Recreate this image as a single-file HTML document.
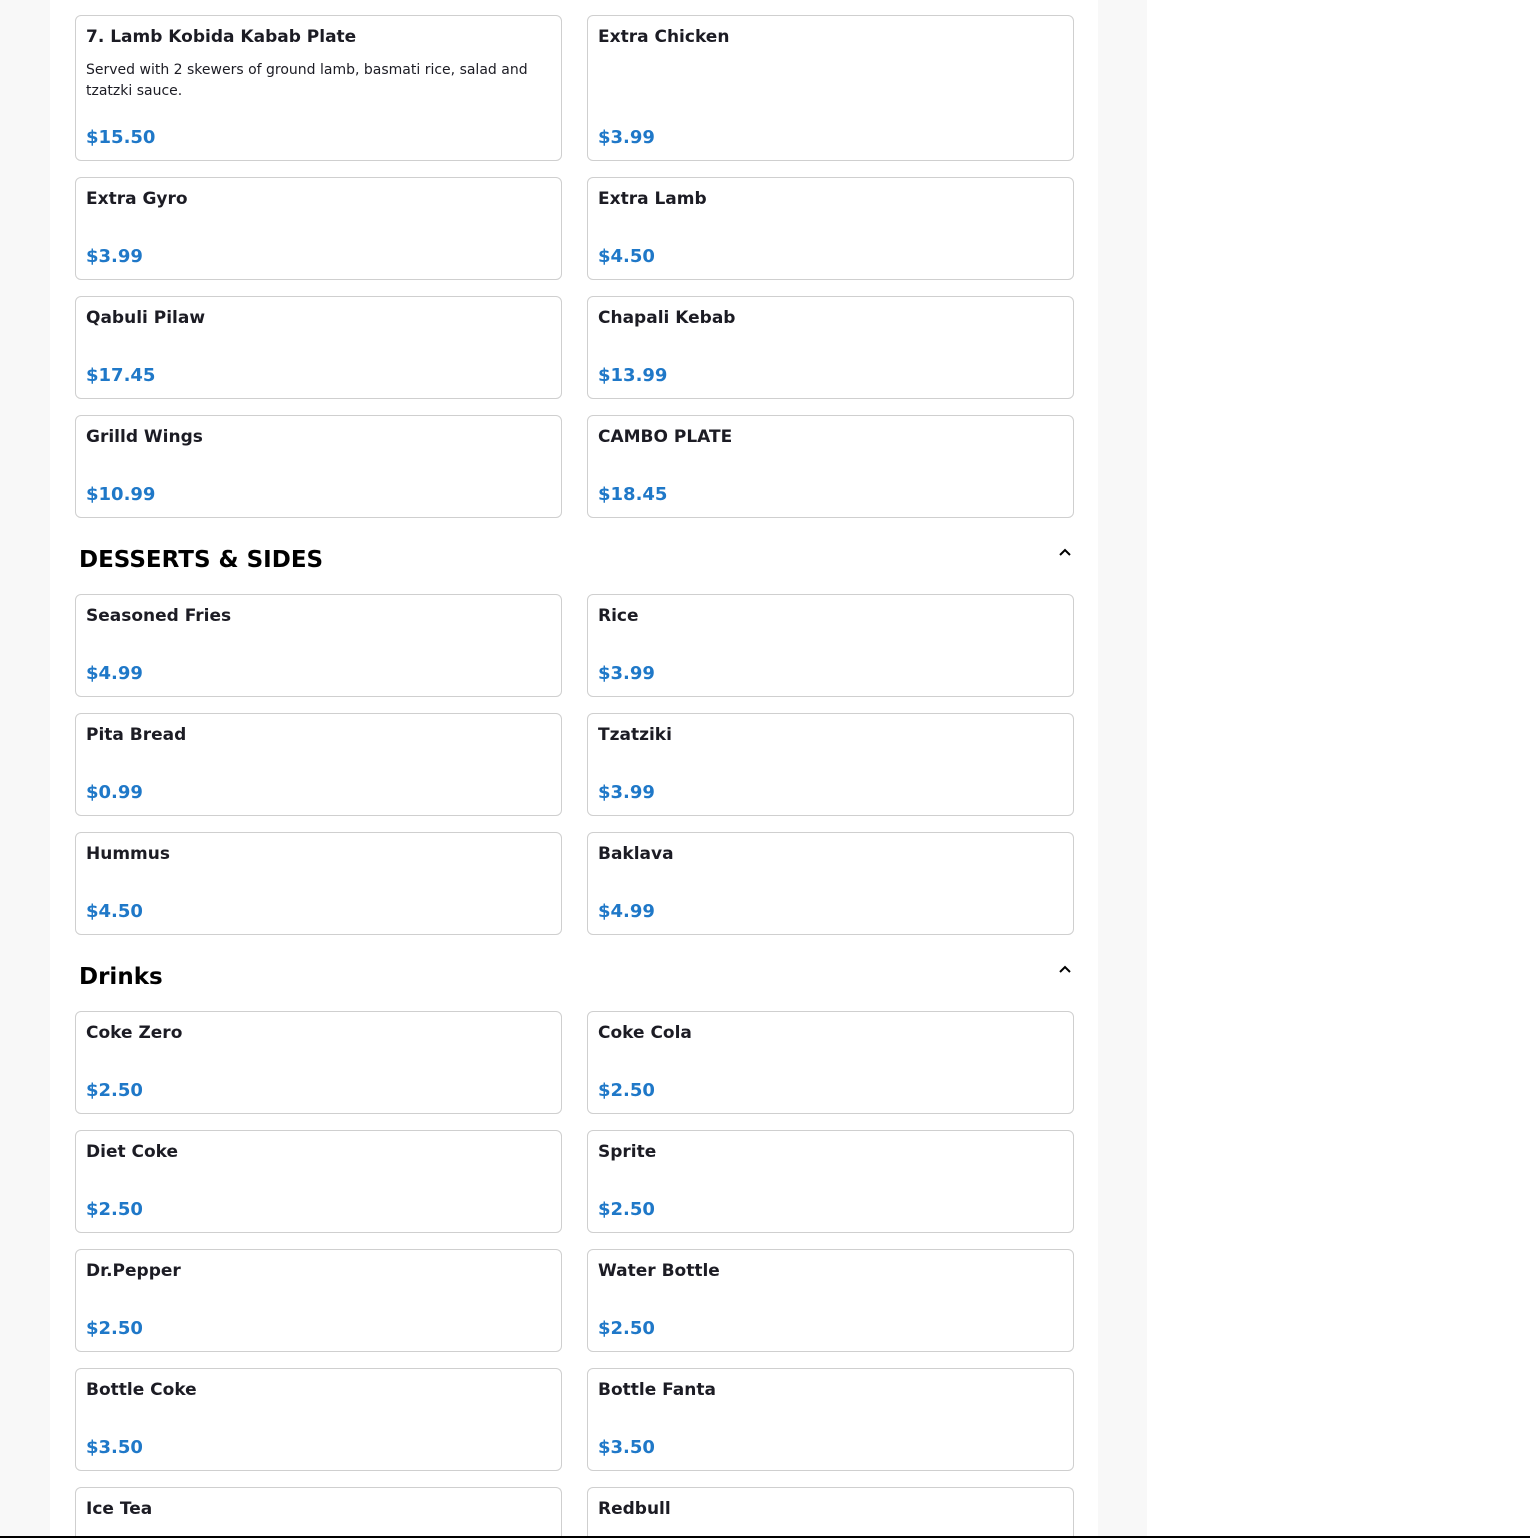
<!DOCTYPE html>
<html style="width:1530px;height:1538px;overflow:hidden"><head><style>
*{box-sizing:border-box;margin:0;padding:0}
body{width:1530px;height:1538px;overflow:hidden;background:#fff;font-family:"DejaVu Sans","Liberation Sans",sans-serif;color:#1c1c24;position:relative}
.lg{position:absolute;left:0;top:0;width:50px;height:1538px;background:#f8f8f8}
.rg{position:absolute;left:1098px;top:0;width:49px;height:1538px;background:#f8f8f8}
.bl{position:absolute;left:0;top:1536px;width:1530px;height:2px;background:#000;z-index:5}
.card{position:absolute;width:487px;height:103px;border:1px solid #cfcfcf;border-radius:6px;background:#fff;padding:10px 10px}
.card .t{font-weight:bold;font-size:17px;line-height:22px}
.card .d{font-size:14px;line-height:21px;margin-top:12px}
.card .p{position:absolute;left:10px;bottom:10px;font-weight:bold;font-size:18px;line-height:24px;color:#1f78c8}
.h{position:absolute;left:79px;font-weight:bold;font-size:23px;line-height:30px;color:#000}
.chev{position:absolute;left:1058px;width:14px;height:10px}
.last{height:51px;border-bottom:none;border-radius:6px 6px 0 0}
</style></head><body>
<div class="lg"></div><div class="rg"></div>
<div class="card" style="left:75px;top:15px;height:146px"><div class="t">7. Lamb Kobida Kabab Plate</div><div class="d">Served with 2 skewers of ground lamb, basmati rice, salad and tzatzki sauce.</div><div class="p">$15.50</div></div>
<div class="card" style="left:587px;top:15px;height:146px"><div class="t">Extra Chicken</div><div class="p">$3.99</div></div>
<div class="card" style="left:75px;top:177px"><div class="t">Extra Gyro</div><div class="p">$3.99</div></div>
<div class="card" style="left:587px;top:177px"><div class="t">Extra Lamb</div><div class="p">$4.50</div></div>
<div class="card" style="left:75px;top:296px"><div class="t">Qabuli Pilaw</div><div class="p">$17.45</div></div>
<div class="card" style="left:587px;top:296px"><div class="t">Chapali Kebab</div><div class="p">$13.99</div></div>
<div class="card" style="left:75px;top:415px"><div class="t">Grilld Wings</div><div class="p">$10.99</div></div>
<div class="card" style="left:587px;top:415px"><div class="t">CAMBO PLATE</div><div class="p">$18.45</div></div>
<div class="h" style="top:545px">DESSERTS &amp; SIDES</div>
<svg class="chev" style="top:547px" viewBox="0 0 14 10"><path d="M2 8L7 3L12 8" fill="none" stroke="#000" stroke-width="2"/></svg>
<div class="card" style="left:75px;top:594px"><div class="t">Seasoned Fries</div><div class="p">$4.99</div></div>
<div class="card" style="left:587px;top:594px"><div class="t">Rice</div><div class="p">$3.99</div></div>
<div class="card" style="left:75px;top:713px"><div class="t">Pita Bread</div><div class="p">$0.99</div></div>
<div class="card" style="left:587px;top:713px"><div class="t">Tzatziki</div><div class="p">$3.99</div></div>
<div class="card" style="left:75px;top:832px"><div class="t">Hummus</div><div class="p">$4.50</div></div>
<div class="card" style="left:587px;top:832px"><div class="t">Baklava</div><div class="p">$4.99</div></div>
<div class="h" style="top:962px">Drinks</div>
<svg class="chev" style="top:964px" viewBox="0 0 14 10"><path d="M2 8L7 3L12 8" fill="none" stroke="#000" stroke-width="2"/></svg>
<div class="card" style="left:75px;top:1011px"><div class="t">Coke Zero</div><div class="p">$2.50</div></div>
<div class="card" style="left:587px;top:1011px"><div class="t">Coke Cola</div><div class="p">$2.50</div></div>
<div class="card" style="left:75px;top:1130px"><div class="t">Diet Coke</div><div class="p">$2.50</div></div>
<div class="card" style="left:587px;top:1130px"><div class="t">Sprite</div><div class="p">$2.50</div></div>
<div class="card" style="left:75px;top:1249px"><div class="t">Dr.Pepper</div><div class="p">$2.50</div></div>
<div class="card" style="left:587px;top:1249px"><div class="t">Water Bottle</div><div class="p">$2.50</div></div>
<div class="card" style="left:75px;top:1368px"><div class="t">Bottle Coke</div><div class="p">$3.50</div></div>
<div class="card" style="left:587px;top:1368px"><div class="t">Bottle Fanta</div><div class="p">$3.50</div></div>
<div class="card last" style="left:75px;top:1487px"><div class="t">Ice Tea</div></div>
<div class="card last" style="left:587px;top:1487px"><div class="t">Redbull</div></div>
<div class="bl"></div>
</body></html>
